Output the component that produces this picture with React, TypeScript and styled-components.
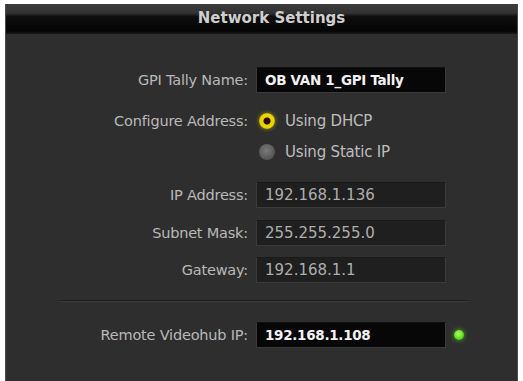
import styled, { createGlobalStyle } from "styled-components";

const Global = createGlobalStyle`
  html, body {
    margin: 0;
    padding: 0;
    background: #ffffff;
    overflow: hidden;
  }
  body {
    font-family: "DejaVu Sans", "Liberation Sans", sans-serif;
  }
`;

const Panel = styled.div`
  margin: 4px 0 0 5px;
  width: 513px;
  height: 390px;
  background: #2e2e2e;
  border-left: 1px solid #4a4a4a;
  border-right: 1px solid #4a4a4a;
  box-sizing: border-box;
  display: flex;
  flex-direction: column;
`;

const TitleBar = styled.div`
  height: 30px;
  display: flex;
  align-items: center;
  justify-content: center;
  background: linear-gradient(
    to bottom,
    #3c3c3c 0%,
    #323232 30%,
    #0e0e0e 42%,
    #050505 90%,
    #1a1a1a 100%
  );
  color: #cfcfcf;
  font-weight: bold;
  font-size: 15px;
  padding: 0 0 3px 20px;
  box-sizing: border-box;
`;

const Form = styled.div`
  display: flex;
  flex-direction: column;
  padding-top: 33px;
`;

const Row = styled.div<{ $top: number }>`
  display: grid;
  grid-template-columns: 242px 190px auto;
  column-gap: 8px;
  align-items: center;
  height: 26px;
  margin-top: ${(p) => p.$top}px;
`;

const Label = styled.div`
  text-align: right;
  color: #b9b9b9;
  font-size: 14.5px;
  letter-spacing: -0.2px;
`;

const Field = styled.div<{ $active?: boolean }>`
  height: 26px;
  box-sizing: border-box;
  display: flex;
  align-items: center;
  padding-left: 8px;
  border: 1px solid ${(p) => (p.$active ? "#3a3a3a" : "#3b3b3b")};
  border-top-color: ${(p) => (p.$active ? "#111" : "#1a1a1a")};
  background: ${(p) => (p.$active ? "#070707" : "#1f1f1f")};
  color: ${(p) => (p.$active ? "#f2f2f2" : "#aeaeae")};
  font-weight: ${(p) => (p.$active ? "bold" : "normal")};
  font-size: ${(p) => (p.$active ? "13.5px" : "15px")};
  letter-spacing: ${(p) => (p.$active ? "-0.3px" : "0")};
`;

const Option = styled.div`
  display: flex;
  align-items: center;
  gap: 10px;
  color: #bdbdbd;
  font-size: 15px;
  letter-spacing: -0.2px;
  padding-left: 3px;
`;

const Radio = styled.span<{ $on?: boolean }>`
  width: 16px;
  height: 16px;
  border-radius: 50%;
  box-sizing: border-box;
  display: inline-block;
  flex-shrink: 0;
  ${(p) =>
    p.$on
      ? `
    background: radial-gradient(circle, #2a0606 0 3px, #e8d400 4px 7px, #b8a500 8px);
    box-shadow: 0 0 4px rgba(230, 210, 0, 0.55);
  `
      : `
    background: radial-gradient(circle at 45% 40%, #7a7a7a, #555 70%, #4a4a4a);
  `}
`;

const Divider = styled.div`
  margin: 17px 50px 0 55px;
  height: 1px;
  background: #1c1c1c;
  border-bottom: 1px solid #3c3c3c;
`;

const Led = styled.span`
  width: 10px;
  height: 10px;
  border-radius: 50%;
  background: radial-gradient(circle at 45% 40%, #b8ff70, #5ee01a 55%, #3aa010);
  box-shadow: 0 0 5px rgba(100, 240, 30, 0.7);
`;

export default function App() {
  return (
    <>
      <Global />
      <Panel>
        <TitleBar>Network Settings</TitleBar>
        <Form>
          <Row $top={0}>
            <Label>GPI Tally Name:</Label>
            <Field $active>OB VAN 1_GPI Tally</Field>
          </Row>
          <Row $top={15}>
            <Label>Configure Address:</Label>
            <Option>
              <Radio $on />
              Using DHCP
            </Option>
          </Row>
          <Row $top={5}>
            <span />
            <Option>
              <Radio />
              Using Static IP
            </Option>
          </Row>
          <Row $top={17}>
            <Label>IP Address:</Label>
            <Field>192.168.1.136</Field>
          </Row>
          <Row $top={12}>
            <Label>Subnet Mask:</Label>
            <Field>255.255.255.0</Field>
          </Row>
          <Row $top={11}>
            <Label>Gateway:</Label>
            <Field>192.168.1.1</Field>
          </Row>
          <Divider />
          <Row $top={20}>
            <Label>Remote Videohub IP:</Label>
            <Field $active>192.168.1.108</Field>
            <Led />
          </Row>
        </Form>
      </Panel>
    </>
  );
}
